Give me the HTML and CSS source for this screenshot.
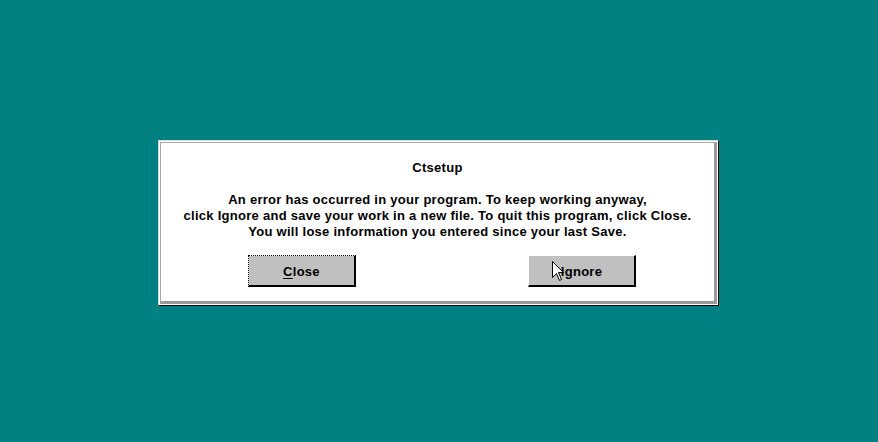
FILE: index.html
```html
<!DOCTYPE html>
<html>
<head>
<meta charset="utf-8">
<link rel="stylesheet" href="styles.css">
</head>
<body>
<div class="desktop">
  <div class="dialog">
    <div class="inner">
      <div class="title">Ctsetup</div>
      <div class="message">
        <div>An error has occurred in your program. To keep working anyway,</div>
        <div>click Ignore and save your work in a new file. To quit this program, click Close.</div>
        <div>You will lose information you entered since your last Save.</div>
      </div>
      <div class="buttons">
        <div class="btn focused"><span class="face"><u>C</u>lose</span></div>
        <div class="btn"><span class="face">Ignore</span>
          <svg class="cursor" width="12" height="20" viewBox="0 0 12 20"><path d="M0.5 0.5 L0.5 16.5 L4.5 12.5 L7.5 19.5 L9.5 18.5 L6.5 11.5 L11.5 11.5 Z" fill="#fff" stroke="#000" stroke-width="1"/></svg>
        </div>
      </div>
    </div>
  </div>
</div>
</body>
</html>
```

FILE: styles.css
```css
html, body {
  margin: 0;
  padding: 0;
}
body {
  background: #008080;
  width: 878px;
  height: 442px;
  overflow: hidden;
  font-family: "Liberation Sans", Arial, sans-serif;
  font-weight: bold;
  font-size: 13px;
  letter-spacing: 0.27px;
  color: #000;
}
.desktop {
  padding: 140px 0 0 158px;
}
.dialog {
  width: 558px;
  height: 163px;
  background: #fff;
  border-top: 1px solid #dcdcdc;
  border-left: 1px solid #dcdcdc;
  border-right: 1px solid #000;
  border-bottom: 1px solid #000;
  padding: 1px 0 0 1px;
  box-sizing: content-box;
}
.inner {
  width: 553px;
  height: 158px;
  border-top: 1px solid #a8a8a8;
  border-left: 1px solid #a8a8a8;
  border-right: 3px solid #9a9a9a;
  border-bottom: 3px solid #9a9a9a;
  display: flex;
  flex-direction: column;
  align-items: center;
}
.title {
  margin-top: 17px;
  line-height: 16px;
  text-align: center;
}
.message {
  margin-top: 16px;
  line-height: 16px;
  text-align: center;
}
.buttons {
  align-self: stretch;
  display: flex;
  justify-content: space-between;
  padding: 0 78px 0 87px;
  margin-top: 15px;
}
.btn {
  position: relative;
  width: 105px;
  height: 29px;
  background: #c0c0c0;
  border-top: 1px solid #fff;
  border-left: 1px solid #fff;
  border-right: 2px solid #000;
  border-bottom: 2px solid #000;
  display: flex;
  align-items: center;
  justify-content: center;
  box-sizing: content-box;
}
.btn.focused {
  outline: 1px dotted #000;
  outline-offset: -1px;
}
.face {
  line-height: 16px;
  padding-top: 2px;
}
.face u {
  text-decoration-thickness: 1px;
  text-underline-offset: 2px;
}
.cursor {
  position: absolute;
  left: 23px;
  top: 5px;
}
```
